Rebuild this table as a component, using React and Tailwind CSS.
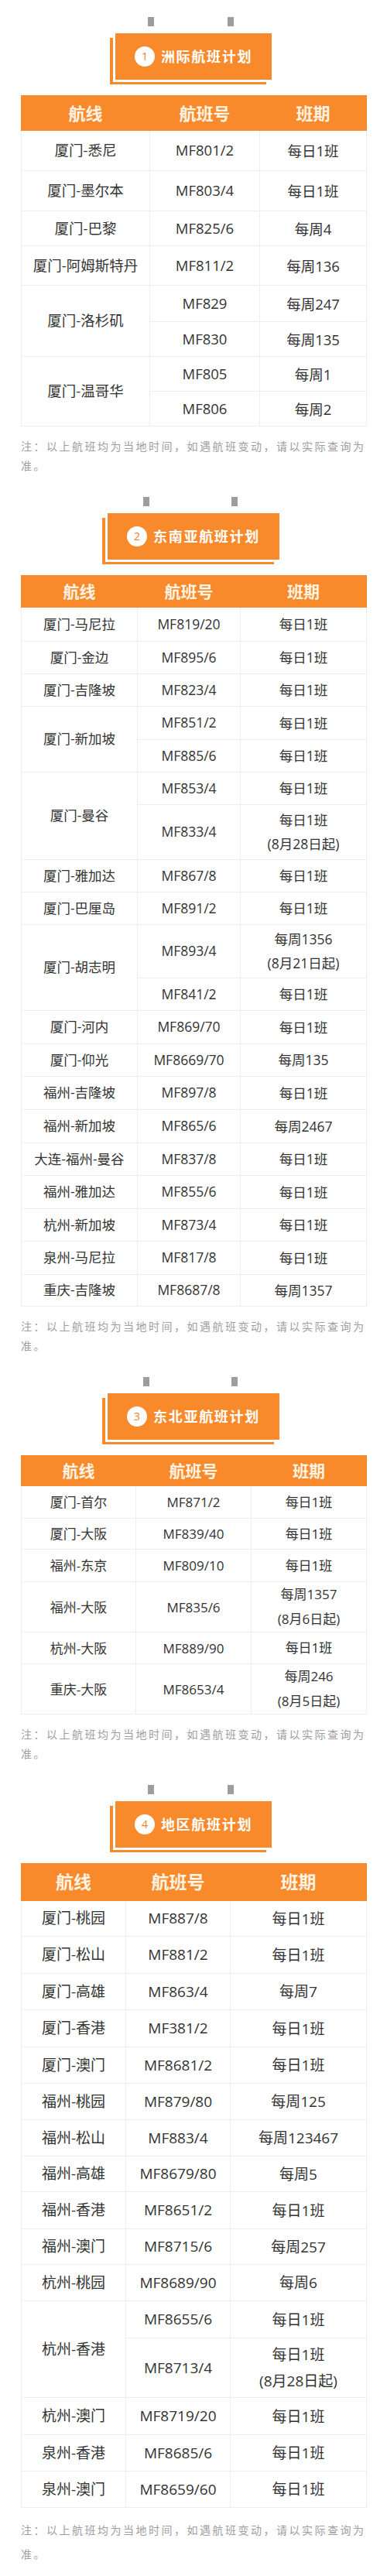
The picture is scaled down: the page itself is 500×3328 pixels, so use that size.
import React from 'react';

const note = '注：以上航班均为当地时间，如遇航班变动，请以实际查询为准。';

const one = (route, no, sched, h) => ({ route, flights: [{ no, sched, h }] });

const tables = [
  {
    num: 1,
    title: '洲际航班计划',
    cols: ['w-[166px]', 'w-[142px]', 'w-[138px]'],
    headH: 'h-[45px]',
    headFs: 'text-[22px]',
    fs: 'text-[18.5px]',
    lead: 'leading-[31px]',
    noteLead: 'leading-[25px]',
    groups: [
      one('厦门-悉尼', 'MF801/2', '每日1班', 'h-[52px]'),
      one('厦门-墨尔本', 'MF803/4', '每日1班', 'h-[52px]'),
      one('厦门-巴黎', 'MF825/6', '每周4', 'h-[45px]'),
      one('厦门-阿姆斯特丹', 'MF811/2', '每周136', 'h-[51px]'),
      {
        route: '厦门-洛杉矶',
        flights: [
          { no: 'MF829', sched: '每周247', h: 'h-[47px]' },
          { no: 'MF830', sched: '每周135', h: 'h-[45px]' },
        ],
      },
      {
        route: '厦门-温哥华',
        flights: [
          { no: 'MF805', sched: '每周1', h: 'h-[45px]' },
          { no: 'MF806', sched: '每周2', h: 'h-[45px]' },
        ],
      },
    ],
  },
  {
    num: 2,
    title: '东南亚航班计划',
    cols: ['w-[150px]', 'w-[133px]', 'w-[163px]'],
    headH: 'h-[41px]',
    headFs: 'text-[21px]',
    fs: 'text-[17.5px]',
    lead: 'leading-[31px]',
    noteLead: 'leading-[25px]',
    groups: [
      one('厦门-马尼拉', 'MF819/20', '每日1班', 'h-[44px]'),
      one('厦门-金边', 'MF895/6', '每日1班', 'h-[42px]'),
      one('厦门-吉隆坡', 'MF823/4', '每日1班', 'h-[42px]'),
      {
        route: '厦门-新加坡',
        flights: [
          { no: 'MF851/2', sched: '每日1班', h: 'h-[43px]' },
          { no: 'MF885/6', sched: '每日1班', h: 'h-[42px]' },
        ],
      },
      {
        route: '厦门-曼谷',
        flights: [
          { no: 'MF853/4', sched: '每日1班', h: 'h-[42px]' },
          { no: 'MF833/4', sched: ['每日1班', '(8月28日起)'], h: 'h-[71px]' },
        ],
      },
      one('厦门-雅加达', 'MF867/8', '每日1班', 'h-[42px]'),
      one('厦门-巴厘岛', 'MF891/2', '每日1班', 'h-[42px]'),
      {
        route: '厦门-胡志明',
        flights: [
          { no: 'MF893/4', sched: ['每周1356', '(8月21日起)'], h: 'h-[69px]' },
          { no: 'MF841/2', sched: '每日1班', h: 'h-[42px]' },
        ],
      },
      one('厦门-河内', 'MF869/70', '每日1班', 'h-[43px]'),
      one('厦门-仰光', 'MF8669/70', '每周135', 'h-[42px]'),
      one('福州-吉隆坡', 'MF897/8', '每日1班', 'h-[43px]'),
      one('福州-新加坡', 'MF865/6', '每周2467', 'h-[43px]'),
      one('大连-福州-曼谷', 'MF837/8', '每日1班', 'h-[42px]'),
      one('福州-雅加达', 'MF855/6', '每日1班', 'h-[43px]'),
      one('杭州-新加坡', 'MF873/4', '每日1班', 'h-[42px]'),
      one('泉州-马尼拉', 'MF817/8', '每日1班', 'h-[43px]'),
      one('重庆-吉隆坡', 'MF8687/8', '每周1357', 'h-[41px]'),
    ],
  },
  {
    num: 3,
    title: '东北亚航班计划',
    cols: ['w-[148px]', 'w-[149px]', 'w-[149px]'],
    headH: 'h-[39px]',
    headFs: 'text-[21px]',
    fs: 'text-[17px]',
    lead: 'leading-[32px]',
    noteLead: 'leading-[25px]',
    groups: [
      one('厦门-首尔', 'MF871/2', '每日1班', 'h-[42px]'),
      one('厦门-大阪', 'MF839/40', '每日1班', 'h-[40px]'),
      one('福州-东京', 'MF809/10', '每日1班', 'h-[42px]'),
      one('福州-大阪', 'MF835/6', ['每周1357', '(8月6日起)'], 'h-[65px]'),
      one('杭州-大阪', 'MF889/90', '每日1班', 'h-[41px]'),
      one('重庆-大阪', 'MF8653/4', ['每周246', '(8月5日起)'], 'h-[65px]'),
    ],
  },
  {
    num: 4,
    title: '地区航班计划',
    cols: ['w-[135px]', 'w-[135px]', 'w-[176px]'],
    headH: 'h-[48px]',
    headFs: 'text-[23px]',
    fs: 'text-[19px]',
    lead: 'leading-[34px]',
    noteLead: 'leading-[31px]',
    groups: [
      one('厦门-桃园', 'MF887/8', '每日1班', 'h-[46px]'),
      one('厦门-松山', 'MF881/2', '每日1班', 'h-[48px]'),
      one('厦门-高雄', 'MF863/4', '每周7', 'h-[47px]'),
      one('厦门-香港', 'MF381/2', '每日1班', 'h-[48px]'),
      one('厦门-澳门', 'MF8681/2', '每日1班', 'h-[47px]'),
      one('福州-桃园', 'MF879/80', '每周125', 'h-[47px]'),
      one('福州-松山', 'MF883/4', '每周123467', 'h-[47px]'),
      one('福州-高雄', 'MF8679/80', '每周5', 'h-[46px]'),
      one('福州-香港', 'MF8651/2', '每日1班', 'h-[48px]'),
      one('福州-澳门', 'MF8715/6', '每周257', 'h-[46px]'),
      one('杭州-桃园', 'MF8689/90', '每周6', 'h-[47px]'),
      {
        route: '杭州-香港',
        flights: [
          { no: 'MF8655/6', sched: '每日1班', h: 'h-[48px]' },
          { no: 'MF8713/4', sched: ['每日1班', '(8月28日起)'], h: 'h-[77px]' },
        ],
      },
      one('杭州-澳门', 'MF8719/20', '每日1班', 'h-[48px]'),
      one('泉州-香港', 'MF8685/6', '每日1班', 'h-[47px]'),
      one('泉州-澳门', 'MF8659/60', '每日1班', 'h-[47px]'),
    ],
  },
];

const cell = 'border border-[#eeeeee] p-0 text-center align-middle';

function TitleBadge({ num, title }) {
  return (
    <div className="mx-auto flex w-fit flex-col">
      <div className="grid h-[12px] grid-cols-[21.5%_8px_1fr_8px_25%]">
        <span />
        <span className="bg-[#9d9d9d]" />
        <span />
        <span className="bg-[#9d9d9d]" />
        <span />
      </div>
      <div className="mt-[6px] border-[3px] border-white shadow-[-7px_6px_0_-3px_#f98a2b]">
        <div className="flex h-[60px] items-center bg-[#f98a2b] px-[25px]">
          <span className="flex h-[26px] w-[26px] items-center justify-center rounded-full bg-white text-[14px] leading-none text-[#e0842f]">
            {num}
          </span>
          <span className="ml-[8px] text-[18px] font-bold leading-none tracking-[1.7px] text-white">
            {title}
          </span>
        </div>
      </div>
    </div>
  );
}

function FlightTable({ t }) {
  return (
    <table className={`w-full table-fixed border-collapse text-[#333333] ${t.fs}`}>
      <colgroup>
        {t.cols.map((c) => (
          <col key={c} className={c} />
        ))}
      </colgroup>
      <thead>
        <tr className={t.headH}>
          {['航线', '航班号', '班期'].map((h) => (
            <th
              key={h}
              className={`border border-[#f98a2b] border-l-[#fcc595] bg-[#f98a2b] p-0 text-center align-middle font-bold leading-none text-[#fff4e4] first:border-l-[#f98a2b] ${t.headFs}`}
            >
              {h}
            </th>
          ))}
        </tr>
      </thead>
      <tbody>
        {t.groups.flatMap((g, gi) =>
          g.flights.map((f, fi) => (
            <tr key={`${gi}-${fi}`} className={f.h}>
              {fi === 0 && (
                <td rowSpan={g.flights.length} className={`${cell} leading-none`}>
                  {g.route}
                </td>
              )}
              <td className={`${cell} leading-none`}>{f.no}</td>
              <td className={`${cell} ${t.lead}`}>
                {Array.isArray(f.sched)
                  ? f.sched.map((s) => <div key={s}>{s}</div>)
                  : f.sched}
              </td>
            </tr>
          ))
        )}
      </tbody>
    </table>
  );
}

export default function App() {
  return (
    <div className="w-[500px] bg-white px-[27px] pb-[16px] font-['Open_Sans','Noto_Sans_CJK_SC',sans-serif]">
      {tables.map((t, i) => (
        <section key={t.num} className={i === 0 ? 'pt-[22px]' : 'pt-[28px]'}>
          <TitleBadge num={t.num} title={t.title} />
          <div className="mt-[17px]">
            <FlightTable t={t} />
          </div>
          <p className={`mt-[13px] text-[14px] tracking-[2.5px] text-[#9e9e9e] ${t.noteLead}`}>
            {note}
          </p>
        </section>
      ))}
    </div>
  );
}
